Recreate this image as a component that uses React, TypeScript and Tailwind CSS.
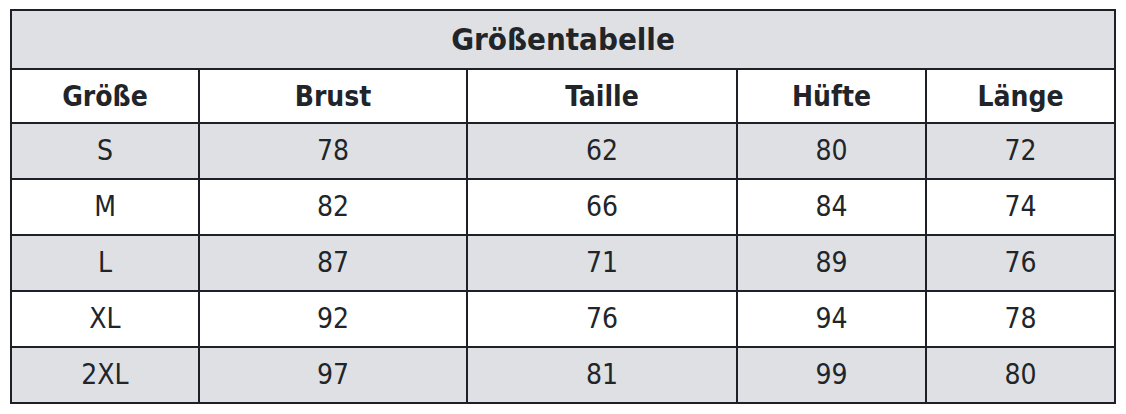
import React from "react";

const rows = [
  ["S", "78", "62", "80", "72"],
  ["M", "82", "66", "84", "74"],
  ["L", "87", "71", "89", "76"],
  ["XL", "92", "76", "94", "78"],
  ["2XL", "97", "81", "99", "80"],
];

const headers = ["Größe", "Brust", "Taille", "Hüfte", "Länge"];

export default function App() {
  return (
    <div
      className="w-[1126px] h-[414px] bg-white pt-[9px] pl-[10px] text-[#212529]"
      style={{ fontFamily: '"DejaVu Sans Condensed", "DejaVu Sans", sans-serif' }}
    >
      <div className="w-[1106px] border-2 border-[#1e2027]">
        <div className="h-[59px] bg-[#dfe0e4] border-b-2 border-[#1e2027] flex items-center justify-center text-[31px] font-bold">
          Größentabelle
        </div>
        <div className="grid grid-cols-[186px_268px_270px_189px_189px] h-[54px] bg-white border-b-2 border-[#1e2027]">
          {headers.map((h, i) => (
            <div
              key={h}
              className={`flex items-center justify-center pt-[2px] text-[28px] font-bold ${i > 0 ? "border-l-2 border-[#1e2027]" : ""}`}
            >
              {h}
            </div>
          ))}
        </div>
        {rows.map((r, ri) => (
          <div
            key={r[0]}
            className={`grid grid-cols-[186px_268px_270px_189px_189px] ${ri < rows.length - 1 ? "h-[56px] border-b-2 border-[#1e2027]" : "h-[54px]"} ${ri % 2 === 0 ? "bg-[#dfe0e4]" : "bg-white"}`}
          >
            {r.map((c, i) => (
              <div
                key={i}
                className={`flex items-center justify-center text-[28px] ${i > 0 ? "border-l-2 border-[#1e2027]" : ""}`}
              >
                {c}
              </div>
            ))}
          </div>
        ))}
      </div>
    </div>
  );
}
